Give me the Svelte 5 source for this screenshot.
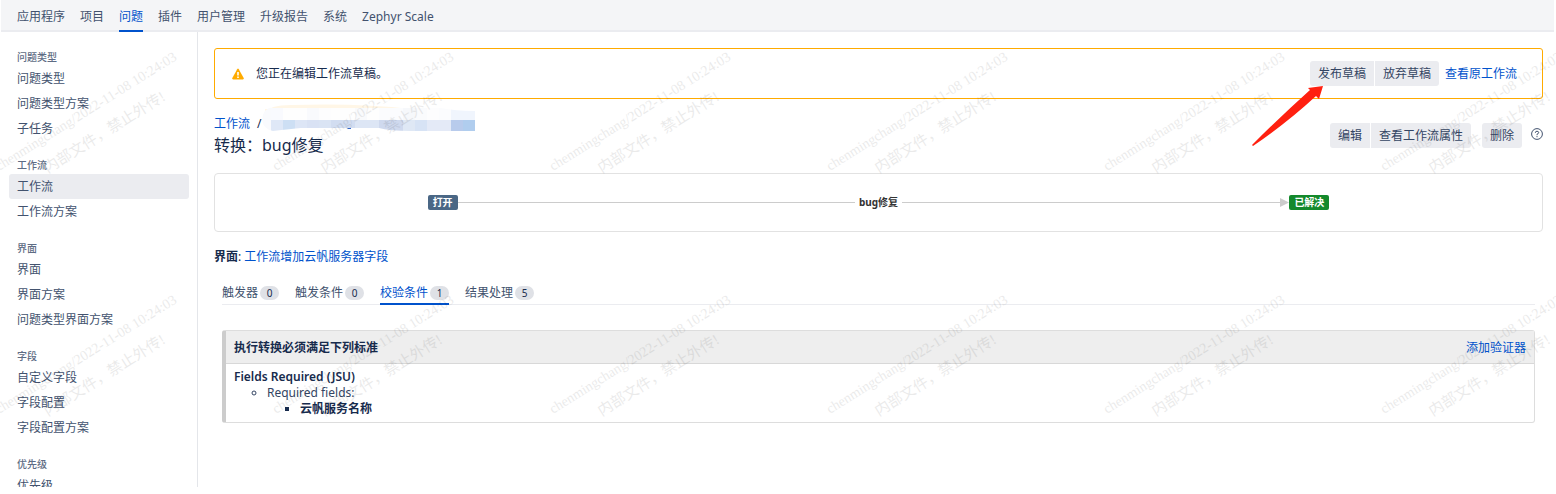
<script>
  const topNav = ['应用程序', '项目', '问题', '插件', '用户管理', '升级报告', '系统', 'Zephyr Scale'];
  const groups = [
    { title: '问题类型', items: ['问题类型', '问题类型方案', '子任务'] },
    { title: '工作流', items: ['工作流', '工作流方案'], active: 0 },
    { title: '界面', items: ['界面', '界面方案', '问题类型界面方案'] },
    { title: '字段', items: ['自定义字段', '字段配置', '字段配置方案'] },
    { title: '优先级', items: ['优先级'] }
  ];
  const tabs = [
    { label: '触发器', count: 0 },
    { label: '触发条件', count: 0 },
    { label: '校验条件', count: 1 },
    { label: '结果处理', count: 5 }
  ];
  let activeTab = $state(2);

  const upper = ['#f9fafe', '#fefefe', '#fefefe', '#f9fafd', '#fdfdfe', '#fefefe', '#fefefe', '#f9fafc', '#fefefe', '#fbfcfe', '#fbfcfe', '#f6f8fb', '#fafbfd', '#fdfdfe', '#fbfcfe', '#f0f5fd', '#f0f5fd'];
  const lower = ['#dfe8f7', '#cddff4', '#dde6f6', '#d9e2f4', '#dae4f4', '#d2ddf1', '#d2ddf1', '#dde6f5', '#dde6f5', '#cfd9ee', '#cfd9ee', '#dfe8f5', '#d7e3f5', '#e4eaf7', '#e4eaf7', '#b8cbec', '#b0cdee'];

  const marks = [0, 1].flatMap((r) => [0, 1, 2, 3, 4, 5].map((c) => ({ x: c * 277 - 1, y: r * 243 + 171 })));
</script>

<div class="shell">
  <nav class="top">
    {#each topNav as item, i}
      <a href="#top" class:current={i === 2}>{item}</a>
    {/each}
  </nav>

  <div class="body">
    <aside>
      {#each groups as g}
        <section>
          <h2>{g.title}</h2>
          {#each g.items as item, i}
            <a href="#side" class:selected={g.active === i}>{item}</a>
          {/each}
        </section>
      {/each}
    </aside>

    <main>
      <div class="banner">
        <svg width="12" height="12" viewBox="0 0 12 12" aria-hidden="true">
          <path d="M5.2 1.2Q6 0 6.8 1.2L11.7 9.9Q12.2 11.3 10.9 11.4H1.1Q-.2 11.3.3 9.9Z" fill="#ffab00" />
          <path d="M5.2 4h1.6v3.6H5.2zM5.2 8.4h1.6v1.5H5.2z" fill="#fff" />
        </svg>
        <p>您正在编辑工作流草稿。</p>
        <div class="pair">
          <button class="target">发布草稿
            <svg class="arrow" width="74" height="64" viewBox="0 0 74 64" aria-hidden="true">
              <path d="M73 2L69 15L66 12Q38 38 3 62L2 61Q31 32 60 6L58 4Z" fill="#ff2010" />
            </svg>
          </button>
          <button>放弃草稿</button>
        </div>
        <a href="#original">查看原工作流</a>
      </div>

      <header>
        <div class="heading">
          <div class="crumbs">
            <a href="#flows">工作流</a><span>/</span>
            <svg width="226" height="30" viewBox="0 0 226 30" aria-hidden="true">
              <clipPath id="smudge">
                <path d="M1 19Q2 7 12 6L180 7Q194 10 214 10V30H150Q128 30 118 27L40 27Q30 28 12 30Q2 28 1 19Z" />
              </clipPath>
              <path d="M4 12Q8 4 30 4Q100 2 150 8H4Z" fill="#fff6e6" />
              <g clip-path="url(#smudge)">
                <rect y="6" width="10" height="24" fill="#f9fafd" />
                {#each upper as color, i}
                  <rect x={10 + i * 12} y="7" width="12" height="12" fill={color} />
                {/each}
                {#each lower as color, i}
                  <rect x={10 + i * 12} y="19" width="12" height="11" fill={color} />
                {/each}
              </g>
              <path d="M86 27H90V28H87Z" fill="#3a6fd0" />
            </svg>
          </div>
          <h1>转换：bug修复</h1>
        </div>
        <div class="pair">
          <button>编辑</button>
          <button>查看工作流属性</button>
        </div>
        <button class="remove">删除</button>
        <a class="help" href="#help" aria-label="帮助">
          <svg width="12" height="12" viewBox="0 0 12 12" fill="none" stroke="#42526e" aria-hidden="true">
            <circle cx="6" cy="6" r="5.4" />
            <path d="M4.3 4.8Q4.4 3.2 6 3.2Q7.7 3.3 7.7 4.7Q7.6 5.6 6 6.3V7.2M6 8.1V9.2" />
          </svg>
        </a>
      </header>

      <div class="diagram">
        <div class="leg">
          <span class="status open">打开</span>
          <span class="line"></span>
        </div>
        <strong>bug修复</strong>
        <div class="leg">
          <span class="line"></span>
          <svg width="9" height="9" viewBox="0 0 9 9" aria-hidden="true"><path d="M0 0L9 4.5L0 9Z" fill="#ccc" /></svg>
          <span class="status done">已解决</span>
        </div>
      </div>

      <p class="screen"><strong>界面</strong>: <a href="#screen">工作流增加云帆服务器字段</a></p>

      <div class="panel">
        <div class="tabs" role="tablist">
          {#each tabs as t, i}
            <button role="tab" aria-selected={i === activeTab} onclick={() => (activeTab = i)}>
              {t.label}<span class="badge">{t.count}</span>
            </button>
          {/each}
        </div>
        <section class="criteria">
          <div class="criteria-head">
            <h3>执行转换必须满足下列标准</h3>
            <a href="#add">添加验证器</a>
          </div>
          <div class="criteria-body">
            <strong>Fields Required (JSU)</strong>
            <ul>
              <li>
                Required fields:
                <ul><li>云帆服务名称</li></ul>
              </li>
            </ul>
          </div>
        </section>
      </div>
    </main>
  </div>

  <svg class="watermark" aria-hidden="true">
    {#each marks as m}
      <g transform="translate({m.x} {m.y}) rotate(-32)">
        <text x="0" y="0">chenmingchang/2022-11-08 10:24:03</text>
        <text class="notice" x="40" y="28">内部文件，禁止外传!</text>
      </g>
    {/each}
  </svg>
</div>

<style>
  :global(body) {
    background: #fff;
  }
  .shell {
    position: relative;
    box-sizing: border-box;
    height: 100vh;
    padding: 0 2px 7px 1px;
    display: flex;
    flex-direction: column;
    overflow: hidden;
    font-family: 'Noto Sans', 'Noto Sans CJK SC', sans-serif;
    font-size: 12px;
    line-height: 16px;
    color: #172b4d;
  }
  h1, h2, h3, p, ul {
    margin: 0;
  }
  a {
    color: #0052cc;
    text-decoration: none;
  }
  .top {
    display: flex;
    gap: 15px;
    padding: 0 16px;
    background: #f4f5f7;
    box-shadow: inset 0 -2px #ebecf0;
  }
  .top a {
    padding: 9px 0 5px;
    border-bottom: 2px solid transparent;
    color: #42526e;
  }
  .top a.current {
    color: #0052cc;
    border-color: #0052cc;
  }
  .body {
    flex: 1;
    min-height: 0;
    display: flex;
    overflow: hidden;
  }
  aside {
    flex: none;
    width: 180px;
    padding: 1px 8px 0;
    border-right: 1px solid #e4e6ea;
    overflow: hidden;
  }
  aside section {
    padding-top: 16px;
  }
  h2 {
    margin: 0 8px 1px;
    font-size: 10px;
    line-height: 16px;
    font-weight: 500;
    color: #5e6c84;
  }
  aside a {
    display: block;
    padding: 0 8px;
    line-height: 25px;
    border-radius: 3px;
    color: #42526e;
  }
  aside a.selected {
    background: #ebecf0;
  }
  main {
    flex: 1;
    min-width: 0;
    padding: 16px 11px 0 16px;
  }
  button {
    font: inherit;
    color: #344563;
    background: #ebecf0;
    border: 0;
    margin: 0;
    padding: 0 8px;
    line-height: 25px;
    border-radius: 3px;
    white-space: nowrap;
  }
  .banner {
    display: flex;
    align-items: center;
    padding: 12px 25px 12px 17px;
    border: 1px solid #ffab00;
    border-radius: 3px;
  }
  .banner p {
    flex: 1;
    margin-left: 12px;
  }
  .banner > a {
    margin-left: 6px;
  }
  .pair {
    display: flex;
    gap: 1px;
  }
  .pair button:first-child {
    border-radius: 3px 0 0 3px;
  }
  .pair button:last-child {
    border-radius: 0 3px 3px 0;
  }
  .target {
    position: relative;
  }
  .arrow {
    position: absolute;
    right: 50px;
    top: 23px;
    z-index: 2;
  }
  header {
    display: flex;
    align-items: flex-start;
    margin-top: 16px;
  }
  .heading {
    flex: 1;
  }
  .crumbs {
    position: relative;
    line-height: 18px;
  }
  .crumbs span {
    margin-left: 7px;
  }
  .crumbs svg {
    position: absolute;
    left: 47px;
    top: -14px;
  }
  h1 {
    font-size: 16px;
    line-height: 24px;
    font-weight: 400;
  }
  header .pair,
  .remove {
    margin-top: 8px;
  }
  .remove {
    margin-left: 11px;
  }
  .help {
    display: flex;
    margin: 13px 0 0 9px;
  }
  .diagram {
    display: grid;
    grid-template-columns: 1fr auto 1fr;
    align-items: center;
    margin-top: 16px;
    padding: 20px 16%;
    border: 1px solid #e2e2e2;
    border-radius: 4px;
    font-size: 10px;
    line-height: 17px;
  }
  .leg {
    display: flex;
    align-items: center;
  }
  .diagram strong {
    padding: 0 4px;
    color: #333;
  }
  .line {
    flex: 1;
    height: 1px;
    background: #ccc;
  }
  .status {
    padding: 0 5px;
    line-height: 15px;
    border-radius: 2px;
    color: #fff;
    font-weight: 700;
  }
  .open {
    background: #4a6785;
  }
  .done {
    background: #14892c;
  }
  .screen {
    margin-top: 17px;
  }
  .panel {
    padding: 16px 8px 0;
  }
  .tabs {
    display: flex;
    gap: 16px;
    box-shadow: inset 0 -1px #ebecf0;
  }
  .tabs button {
    display: flex;
    align-items: center;
    padding: 2px 0 0;
    line-height: 20px;
    background: none;
    border-radius: 0;
    border-bottom: 2px solid transparent;
    color: #42526e;
  }
  .tabs button[aria-selected='true'] {
    color: #0052cc;
    border-color: #0052cc;
  }
  .badge {
    margin-left: 2px;
    width: 19px;
    border-radius: 7px;
    background: #dfe1e6;
    color: #172b4d;
    font-size: 10px;
    line-height: 14px;
    text-align: center;
  }
  .criteria {
    margin-top: 25px;
    border: 1px solid #ddd;
    border-left: 4px solid #ccc;
    border-radius: 3px;
  }
  .criteria-head {
    display: flex;
    justify-content: space-between;
    padding: 9px 8px 7px;
    background: #eee;
    border-bottom: 1px solid #d8d8d8;
  }
  h3 {
    font-size: 12px;
    line-height: 16px;
    font-weight: 600;
  }
  .criteria-body {
    padding: 5px 8px;
  }
  .criteria-body strong {
    display: block;
    font-weight: 600;
  }
  ul {
    padding-left: 33px;
    list-style: circle;
    color: #344563;
  }
  ul ul {
    list-style: square;
    font-weight: 600;
    color: #172b4d;
  }
  .watermark {
    position: absolute;
    inset: 0;
    width: 100%;
    height: 100%;
    pointer-events: none;
    font-family: 'Liberation Serif', 'Noto Sans CJK SC', serif;
    font-size: 14px;
    fill: #000;
    opacity: 0.08;
  }
  .notice {
    font-size: 15px;
  }
</style>
